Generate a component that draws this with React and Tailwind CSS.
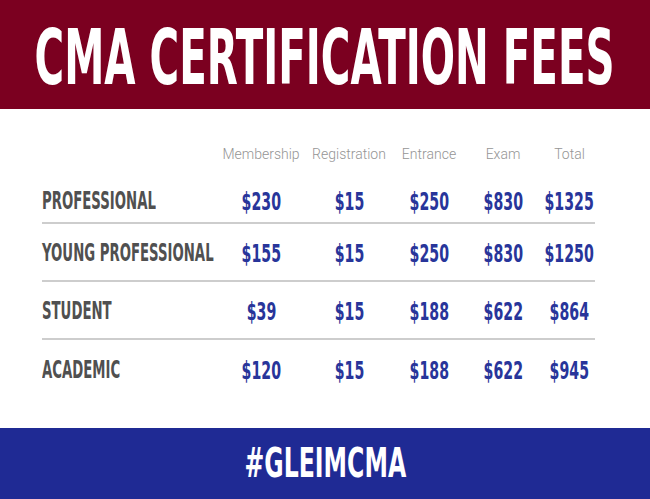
import React from 'react';

const rows = [
  { name: 'PROFESSIONAL', fees: ['$230', '$15', '$250', '$830', '$1325'], h: 'h-[47px]' },
  { name: 'YOUNG PROFESSIONAL', fees: ['$155', '$15', '$250', '$830', '$1250'], h: 'h-[58px]' },
  { name: 'STUDENT', fees: ['$39', '$15', '$188', '$622', '$864'], h: 'h-[58px]' },
  { name: 'ACADEMIC', fees: ['$120', '$15', '$188', '$622', '$945'], h: 'h-[58px]' },
];

const headers = ['Membership', 'Registration', 'Entrance', 'Exam', 'Total'];

const grid = 'grid grid-cols-[178px_82px_94px_66px_82px_51px]';
const narrow = { fontFamily: '"DejaVu Sans Condensed", "Liberation Sans", sans-serif' };

const App = () => {
  return (
    <div className="w-[650px] h-[499px] flex flex-col bg-white overflow-hidden">
      <div className="h-[109px] bg-[#7b0020] flex items-center justify-center pt-[6px]">
        <span
          className="inline-block whitespace-nowrap text-white font-bold text-[76px] leading-none scale-x-[0.59] origin-center"
          style={narrow}
        >
          CMA CERTIFICATION FEES
        </span>
      </div>

      <div className="flex-1 pl-[42px] pt-[33px]">
        <div className={`${grid} h-[35px] pb-[10px] items-center`}>
          <div />
          {headers.map(h => (
            <div
              key={h}
              className="flex justify-center whitespace-nowrap text-[14px] text-[#959595] font-light"
              style={{ fontFamily: 'Roboto, "Liberation Sans", sans-serif' }}
            >
              {h}
            </div>
          ))}
        </div>
        <div className="w-[553px]">
          {rows.map((row, i) => (
            <div
              key={row.name}
              className={`${grid} ${row.h} pt-[3px] items-center ${i < rows.length - 1 ? 'border-b-2 border-[#cdcdcd]' : ''}`}
            >
              <div className="whitespace-nowrap">
                <span
                  className="inline-block text-[25px] leading-none font-bold text-[#505050] scale-x-[0.59] origin-left"
                  style={narrow}
                >
                  {row.name}
                </span>
              </div>
              {row.fees.map((fee, j) => (
                <div key={j} className="flex justify-center whitespace-nowrap">
                  <span
                    className="inline-block text-[25px] leading-none font-bold text-[#28359a] scale-x-[0.63] origin-center"
                    style={narrow}
                  >
                    {fee}
                  </span>
                </div>
              ))}
            </div>
          ))}
        </div>
      </div>

      <div className="h-[71px] bg-[#1f2a94] flex items-center justify-center">
        <span
          className="inline-block whitespace-nowrap text-white font-bold text-[41px] leading-none scale-x-[0.64] origin-center"
          style={narrow}
        >
          #GLEIMCMA
        </span>
      </div>
    </div>
  );
};

export default App;
